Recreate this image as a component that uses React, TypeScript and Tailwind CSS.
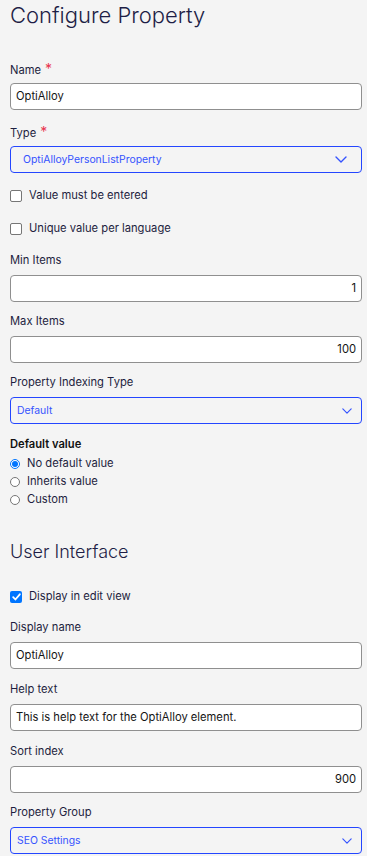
import React from "react";

const font = { fontFamily: "Inter, 'Noto Sans', sans-serif" };

function Label({ text, required, className = "" }: { text: string; required?: boolean; className?: string }) {
  return (
    <div className={`h-[15px] text-[11.2px] leading-[15px] text-[#1e1e40] mb-[7px] ${className}`}>
      {text}
      {required && <span className="text-[#e8344e] ml-[4px] text-[14px]">*</span>}
    </div>
  );
}

function TextInput({ value, right }: { value: string; right?: boolean }) {
  return (
    <div
      className={`h-[27px] bg-white border border-[#8f8f8f] rounded-[4px] flex items-center px-[5px] text-[11.2px] text-[#141414] ${
        right ? "justify-end" : ""
      }`}
    >
      {value}
    </div>
  );
}

function Select({ value, wide }: { value: string; wide?: boolean }) {
  return (
    <div
      className={`h-[27px] border border-[#2446ff] rounded-[4px] flex items-center justify-between text-[10.4px] text-[#3553ff] ${
        wide ? "pl-[12px] pr-[14px]" : "pl-[6px] pr-[9px]"
      }`}
    >
      <span>{value}</span>
      <svg
        width={wide ? 12 : 10}
        height={wide ? 7 : 6}
        viewBox="0 0 12 7"
        fill="none"
        stroke="#3553ff"
        strokeWidth="1.4"
        strokeLinecap="round"
        strokeLinejoin="round"
      >
        <path d="M1 1l5 5 5-5" />
      </svg>
    </div>
  );
}

function Check({ text, checked, className = "" }: { text: string; checked?: boolean; className?: string }) {
  return (
    <div className={`flex items-center h-[15px] text-[11.2px] leading-[15px] text-[#1e1e40] ${className}`}>
      {checked ? (
        <span className="w-[12px] h-[12px] rounded-[2px] bg-[#0075ff] flex items-center justify-center">
          <svg width="9" height="8" viewBox="0 0 9 8" fill="none" stroke="white" strokeWidth="1.8" strokeLinecap="round" strokeLinejoin="round">
            <path d="M1.2 4.2l2.2 2.3L7.8 1.3" />
          </svg>
        </span>
      ) : (
        <span className="w-[12px] h-[12px] rounded-[2px] bg-white border border-[#767676]" />
      )}
      <span className="ml-[7px]">{text}</span>
    </div>
  );
}

function Radio({ text, checked }: { text: string; checked?: boolean }) {
  return (
    <div className="flex items-center h-[18px] text-[11.2px] leading-[18px] text-[#1e1e40]">
      {checked ? (
        <span className="w-[10px] h-[10px] mt-[2px] rounded-full border border-[#0075ff] bg-white flex items-center justify-center">
          <span className="w-[6px] h-[6px] rounded-full bg-[#0075ff]" />
        </span>
      ) : (
        <span className="w-[10px] h-[10px] mt-[2px] rounded-full border border-[#767676] bg-white" />
      )}
      <span className="ml-[7px]">{text}</span>
    </div>
  );
}

export default function App() {
  return (
    <div className="min-h-[856px] w-[367px] bg-[#f4f4f4] pl-[10px] pr-[5px] pt-[1px]" style={font}>
      <h1 className="text-[22px] leading-[28px] font-light text-[#1e1e46]">Configure Property</h1>

      <div className="mt-[32px]">
        <Label text="Name" required />
        <TextInput value="OptiAlloy" />
      </div>

      <div className="mt-[14px]">
        <Label text="Type" required />
        <Select value="OptiAlloyPersonListProperty" wide />
      </div>

      <Check text="Value must be entered" className="mt-[15px]" />
      <Check text="Unique value per language" className="mt-[18px]" />

      <div className="mt-[17px]">
        <Label text="Min Items" />
        <TextInput value="1" right />
      </div>

      <div className="mt-[12px]">
        <Label text="Max Items" />
        <TextInput value="100" right />
      </div>

      <div className="mt-[12px]">
        <Label text="Property Indexing Type" />
        <Select value="Default" />
      </div>

      <div className="mt-[13px] h-[15px] text-[11.2px] leading-[15px] font-semibold text-[#111]">Default value</div>
      <div className="mt-[2px]">
        <Radio text="No default value" checked />
        <Radio text="Inherits value" />
        <Radio text="Custom" />
      </div>

      <h2 className="mt-[32px] text-[18px] leading-[24px] font-light text-[#1e1e46]">User Interface</h2>

      <Check text="Display in edit view" checked className="mt-[25px]" />

      <div className="mt-[16px]">
        <Label text="Display name" />
        <TextInput value="OptiAlloy" />
      </div>

      <div className="mt-[13px]">
        <Label text="Help text" />
        <TextInput value="This is help text for the OptiAlloy element." />
      </div>

      <div className="mt-[13px]">
        <Label text="Sort index" />
        <TextInput value="900" right />
      </div>

      <div className="mt-[12px]">
        <Label text="Property Group" />
        <Select value="SEO Settings" />
      </div>
    </div>
  );
}
